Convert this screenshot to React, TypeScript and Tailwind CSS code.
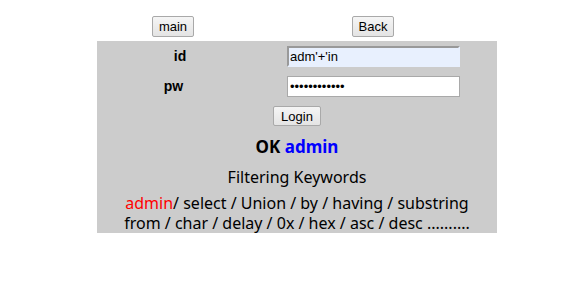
export default function App() {
  const btn =
    "h-[21px] px-[6px] border border-[#a9a9a9] rounded-[2px] bg-gradient-to-b from-[#f5f5f5] to-[#e4e4e4] text-[13px] leading-none text-black font-['Liberation_Sans',Arial,sans-serif]";

  return (
    <div className="w-[570px] h-[288px] bg-white font-['Noto_Sans',sans-serif]">
      {/* top links */}
      <div className="h-[41px] pt-[16px] ml-[73px] w-[400px] grid grid-cols-2 items-start">
        <div className="flex justify-center">
          <button className={btn}>main</button>
        </div>
        <div className="flex justify-center">
          <button className={btn}>Back</button>
        </div>
      </div>

      <div className="ml-[97px] w-[400px] h-[192px] bg-[#cccccc] flex flex-col overflow-hidden">
        <div className="flex items-center h-[30px] pt-[1px]">
          <div className="w-[166px] text-center text-[14px] font-bold text-black font-['Liberation_Sans',Arial,sans-serif]">
            id
          </div>
          <input
            readOnly
            value="adm'+'in"
            className="ml-[24px] w-[173px] h-[21px] bg-[#e8f0fe] border-2 border-t-[#999999] border-l-[#999999] border-b-[#e8f0fe] border-r-[#e8f0fe] px-[1px] text-[13px] text-black outline-none font-['Liberation_Sans',Arial,sans-serif]"
          />
        </div>
        <div className="flex items-center h-[30px]">
          <div className="w-[166px] pr-[13px] text-center text-[14px] font-bold text-black font-['Liberation_Sans',Arial,sans-serif]">
            pw
          </div>
          <input
            readOnly
            type="password"
            value="adm'+'in1234"
            className="ml-[24px] w-[173px] h-[21px] bg-white border border-[#a9a9a9] px-[2px] text-[13px] text-black outline-none font-['Liberation_Sans',Arial,sans-serif]"
          />
        </div>
        <div className="flex justify-center pt-[5px]">
          <button className="h-[20px] w-[48px] border border-[#a9a9a9] rounded-[2px] bg-gradient-to-b from-[#f5f5f5] to-[#e4e4e4] text-[13px] leading-none text-black font-['Liberation_Sans',Arial,sans-serif]">
            Login
          </button>
        </div>
        <div className="text-center text-[17px] font-bold leading-[20px] mt-[11px] text-black">
          OK <span className="text-[#0000ff]">admin</span>
        </div>
        <div className="text-center text-[16px] leading-[20px] mt-[10px] text-black">
          Filtering Keywords
        </div>
        <div className="text-center text-[16px] leading-[20px] mt-[6px] text-black">
          <span className="text-[#ff0000]">admin</span>/ select / Union / by / having / substring
          <br />
          from / char / delay / 0x / hex / asc / desc ..........
        </div>
      </div>
    </div>
  );
}
